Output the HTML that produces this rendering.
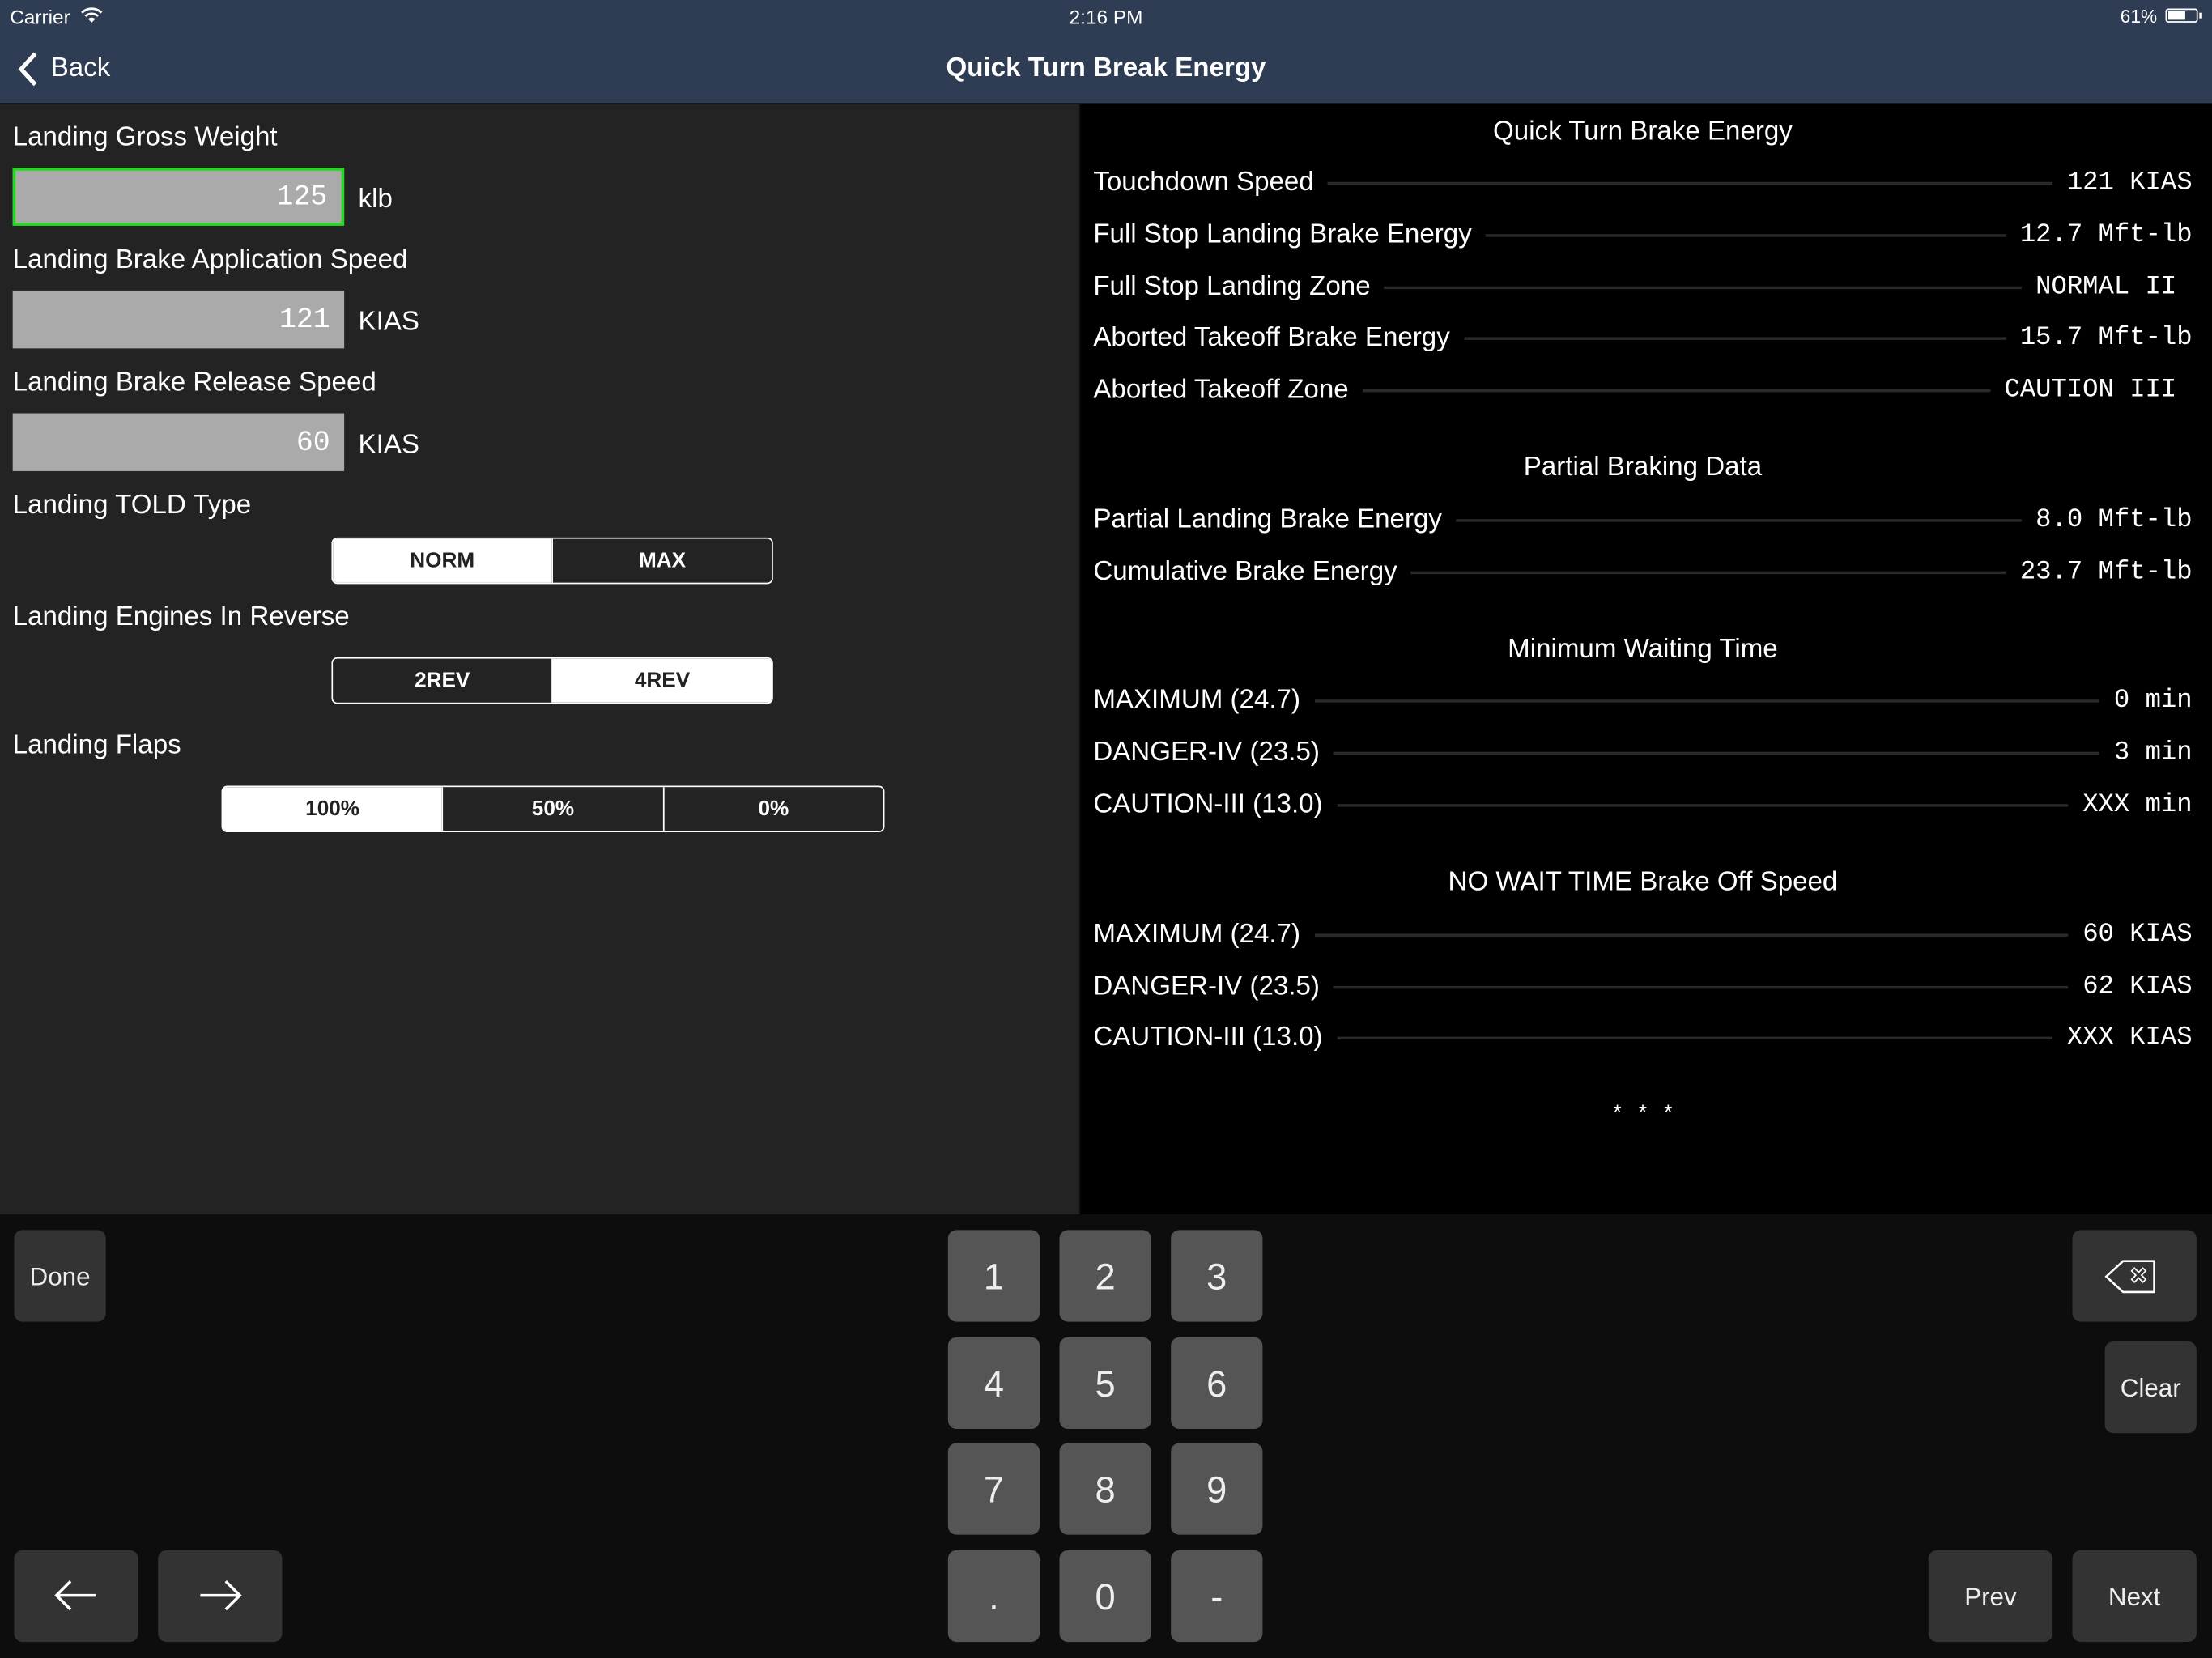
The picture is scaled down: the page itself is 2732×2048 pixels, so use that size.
<!DOCTYPE html>
<html><head><meta charset="utf-8"><style>
html,body{margin:0;padding:0;width:2732px;height:2048px;overflow:hidden;background:#0d0d0d}
#w{position:absolute;left:0;top:0;width:1568px;height:1175px;transform:scale(1.74235);transform-origin:0 0;font-family:"Liberation Sans",sans-serif;color:#fff}
.a{position:absolute}
.nav{left:0;top:0;width:1568px;height:73px;background:#2e3d54}
.left{left:0;top:74px;width:765px;height:787px;background:#232323}
.right{left:766px;top:74px;width:802px;height:787px;background:#000}
.kb{left:0;top:861px;width:1568px;height:314px;background:#0d0d0d}
.lbl{left:9px;font-size:19px;line-height:22px;margin-top:2px}
.inp{left:9px;width:235px;height:41px;background:#aaa;box-sizing:border-box;text-align:right;padding-right:10px;font-family:"Liberation Mono",monospace;font-size:20px;line-height:43px;color:#fff}
.unit{left:254px;font-size:19px;line-height:22px;margin-top:2px}
.seg{display:flex;border:1px solid #fff;border-radius:4px;overflow:hidden;box-sizing:border-box;height:33px}
.seg div{flex:1;text-align:center;font-size:15px;font-weight:bold;line-height:32px;color:#fff;background:#232323}
.seg div+div{border-left:1px solid #fff}
.seg div.on{background:#fff;color:#222}
.hd{left:766px;width:797px;text-align:center;font-size:19px;line-height:22px;margin-top:2px}
.row{left:775px;width:779px;display:flex;align-items:center;font-size:19px;line-height:22px;margin-top:2px}
.row .ln{flex:1;height:2px;background:#2a2a2d;margin:0 10px}
.row .v{font-family:"Liberation Mono",monospace;font-size:18.5px;white-space:pre}
.k{border-radius:6px;background:#333;text-align:center;color:#eee;font-size:18px}
.n{background:#555;font-size:26px;width:65px;height:65px;line-height:67px}
</style></head><body><div id="w">
<div class="a nav"></div>
<div class="a" style="left:7px;top:4px;font-size:14px">Carrier</div>
<svg class="a" style="left:57px;top:5px" width="16" height="12" viewBox="0 0 16 12"><path d="M1 4 A10 10 0 0 1 15 4" stroke="#fff" stroke-width="1.6" fill="none"/><path d="M3.5 6.5 A6.5 6.5 0 0 1 12.5 6.5" stroke="#fff" stroke-width="1.6" fill="none"/><path d="M8 11 L5.5 8.5 A3.5 3.5 0 0 1 10.5 8.5Z" fill="#fff"/></svg>
<div class="a" style="left:0;width:1568px;top:4px;text-align:center;font-size:14px">2:16 PM</div>
<div class="a" style="left:1503px;top:4px;font-size:13px">61%</div>
<div class="a" style="left:1535px;top:6px;width:23px;height:10px;border:1px solid #fff;border-radius:2px;box-sizing:border-box"><div style="margin:1px;width:12px;height:6px;background:#fff"></div></div>
<div class="a" style="left:1559px;top:9px;width:2px;height:4px;background:#fff"></div>
<svg class="a" style="left:12px;top:36px" width="16" height="26" viewBox="0 0 16 26"><path d="M13 2 L3 13 L13 24" stroke="#fff" stroke-width="3" fill="none"/></svg>
<div class="a" style="left:36px;top:38px;font-size:19px">Back</div>
<div class="a" style="left:0;width:1568px;top:38px;text-align:center;font-size:19px;font-weight:bold">Quick Turn Break Energy</div>

<div class="a left"></div>
<div class="a lbl" style="top:85px">Landing Gross Weight</div>
<div class="a inp" style="top:119px;border:2px solid #1fdc1f;line-height:39px">125</div>
<div class="a unit" style="top:129px">klb</div>
<div class="a lbl" style="top:172px">Landing Brake Application Speed</div>
<div class="a inp" style="top:206px">121</div>
<div class="a unit" style="top:216px">KIAS</div>
<div class="a lbl" style="top:259px">Landing Brake Release Speed</div>
<div class="a inp" style="top:293px">60</div>
<div class="a unit" style="top:303px">KIAS</div>
<div class="a lbl" style="top:346px">Landing TOLD Type</div>
<div class="a seg" style="left:235px;top:381px;width:313px"><div class="on">NORM</div><div>MAX</div></div>
<div class="a lbl" style="top:425px">Landing Engines In Reverse</div>
<div class="a seg" style="left:235px;top:466px;width:313px"><div>2REV</div><div class="on">4REV</div></div>
<div class="a lbl" style="top:516px">Landing Flaps</div>
<div class="a seg" style="left:157px;top:557px;width:470px"><div class="on">100%</div><div>50%</div><div>0%</div></div>

<div class="a right"></div>
<div class="a hd" style="top:81px">Quick Turn Brake Energy</div>
<div class="a row" style="top:117px"><span>Touchdown Speed</span><span class="ln"></span><span class="v">121 KIAS</span></div>
<div class="a row" style="top:154px"><span>Full Stop Landing Brake Energy</span><span class="ln"></span><span class="v">12.7 Mft-lb</span></div>
<div class="a row" style="top:191px"><span>Full Stop Landing Zone</span><span class="ln"></span><span class="v">NORMAL II </span></div>
<div class="a row" style="top:227px"><span>Aborted Takeoff Brake Energy</span><span class="ln"></span><span class="v">15.7 Mft-lb</span></div>
<div class="a row" style="top:264px"><span>Aborted Takeoff Zone</span><span class="ln"></span><span class="v">CAUTION III </span></div>
<div class="a hd" style="top:319px">Partial Braking Data</div>
<div class="a row" style="top:356px"><span>Partial Landing Brake Energy</span><span class="ln"></span><span class="v">8.0 Mft-lb</span></div>
<div class="a row" style="top:393px"><span>Cumulative Brake Energy</span><span class="ln"></span><span class="v">23.7 Mft-lb</span></div>
<div class="a hd" style="top:448px">Minimum Waiting Time</div>
<div class="a row" style="top:484px"><span>MAXIMUM (24.7)</span><span class="ln"></span><span class="v">0 min</span></div>
<div class="a row" style="top:521px"><span>DANGER-IV (23.5)</span><span class="ln"></span><span class="v">3 min</span></div>
<div class="a row" style="top:558px"><span>CAUTION-III (13.0)</span><span class="ln"></span><span class="v">XXX min</span></div>
<div class="a hd" style="top:613px">NO WAIT TIME Brake Off Speed</div>
<div class="a row" style="top:650px"><span>MAXIMUM (24.7)</span><span class="ln"></span><span class="v">60 KIAS</span></div>
<div class="a row" style="top:687px"><span>DANGER-IV (23.5)</span><span class="ln"></span><span class="v">62 KIAS</span></div>
<div class="a row" style="top:723px"><span>CAUTION-III (13.0)</span><span class="ln"></span><span class="v">XXX KIAS</span></div>
<div class="a hd" style="top:778px;font-family:'Liberation Mono',monospace;font-size:15px">* * *</div>

<div class="a kb"></div>
<div class="a k" style="left:10px;top:872px;width:65px;height:65px;line-height:67px">Done</div>
<div class="a k n" style="left:672px;top:872px">1</div>
<div class="a k n" style="left:751px;top:872px">2</div>
<div class="a k n" style="left:830px;top:872px">3</div>
<div class="a k n" style="left:672px;top:948px">4</div>
<div class="a k n" style="left:751px;top:948px">5</div>
<div class="a k n" style="left:830px;top:948px">6</div>
<div class="a k n" style="left:672px;top:1023px">7</div>
<div class="a k n" style="left:751px;top:1023px">8</div>
<div class="a k n" style="left:830px;top:1023px">9</div>
<div class="a k n" style="left:672px;top:1099px">.</div>
<div class="a k n" style="left:751px;top:1099px">0</div>
<div class="a k n" style="left:830px;top:1099px">-</div>
<div class="a k" style="left:1469px;top:872px;width:88px;height:65px"><svg width="88" height="65" viewBox="0 0 88 65"><path d="M24 33 L36 22 L58 22 L58 44 L36 44 Z" stroke="#fff" stroke-width="1.5" fill="none"/><path d="M44 27 L47 30 L50 27 L52 29 L49 32 L52 35 L50 37 L47 34 L44 37 L42 35 L45 32 L42 29 Z" stroke="#fff" stroke-width="1" fill="none"/></svg></div>
<div class="a k" style="left:1492px;top:951px;width:65px;height:65px;line-height:67px">Clear</div>
<div class="a k" style="left:10px;top:1099px;width:88px;height:65px"><svg width="88" height="65" viewBox="0 0 88 65"><path d="M58 32 L30 32 M40 22 L30 32 L40 42" stroke="#fff" stroke-width="2" fill="none"/></svg></div>
<div class="a k" style="left:112px;top:1099px;width:88px;height:65px"><svg width="88" height="65" viewBox="0 0 88 65"><path d="M30 32 L58 32 M48 22 L58 32 L48 42" stroke="#fff" stroke-width="2" fill="none"/></svg></div>
<div class="a k" style="left:1367px;top:1099px;width:88px;height:65px;line-height:67px">Prev</div>
<div class="a k" style="left:1469px;top:1099px;width:88px;height:65px;line-height:67px">Next</div>
</div></body></html>
